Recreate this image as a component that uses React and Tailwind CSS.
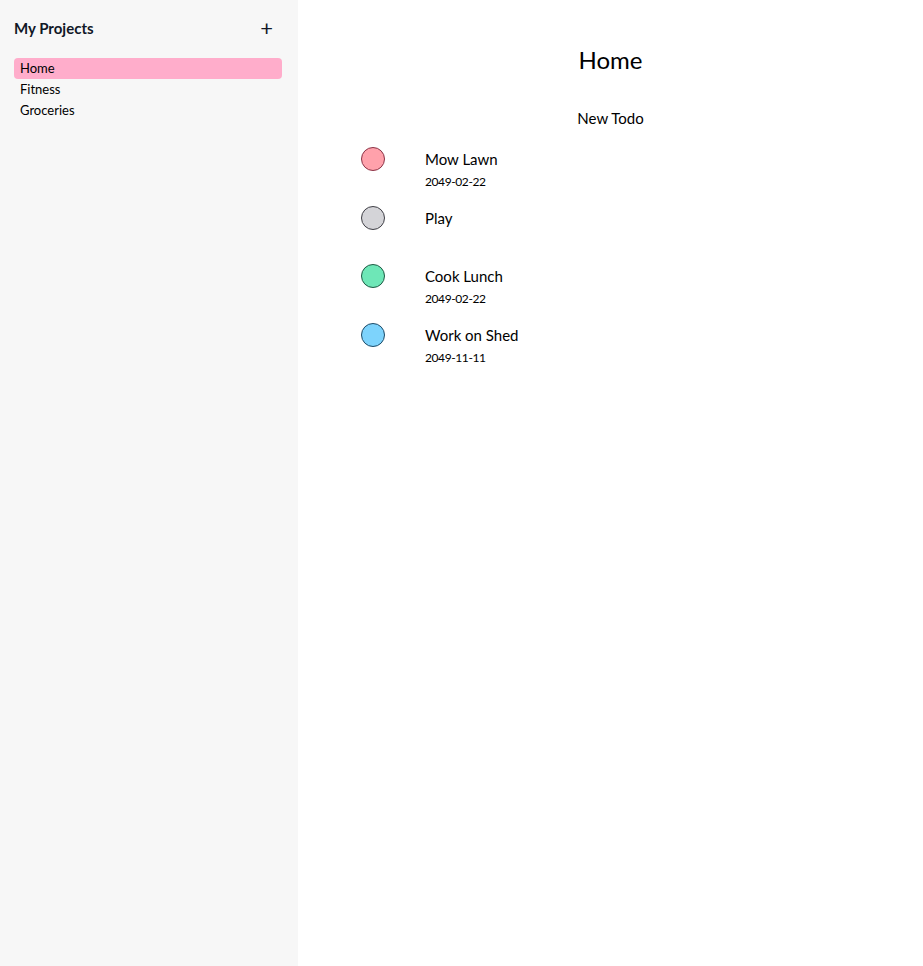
import React from 'react';

const projects = ['Home', 'Fitness', 'Groceries'];

const todos = [
  { title: 'Mow Lawn', date: '2049-02-22', color: 'bg-[#ffa1ab]', border: 'border-[#8a3346]' },
  { title: 'Play', date: '', color: 'bg-[#d4d4d8]', border: 'border-[#3f3f46]' },
  { title: 'Cook Lunch', date: '2049-02-22', color: 'bg-[#6ee7b7]', border: 'border-[#1f5a44]' },
  { title: 'Work on Shed', date: '2049-11-11', color: 'bg-[#7dd3fc]', border: 'border-[#1e4a66]' },
];

const App = () => {
  return (
    <div className="flex min-h-[966px] text-black" style={{ fontFamily: 'Lato, "Noto Sans", sans-serif' }}>
      <aside className="w-[298px] shrink-0 bg-[#f7f7f7] px-[14px] pt-[17px]">
        <div className="flex items-center justify-between pr-[11px]">
          <h2 className="text-[15px] font-bold text-[#111827]">My Projects</h2>
          <button className="text-[22px] leading-none text-[#111827]">+</button>
        </div>
        <ul className="mt-[18px]">
          {projects.map((p) => (
            <li
              key={p}
              className={`mr-[2px] h-[21px] rounded-[4px] px-[6px] text-[13px] leading-[21px] ${p === 'Home' ? 'bg-[#ffadcb]' : ''}`}
            >
              {p}
            </li>
          ))}
        </ul>
      </aside>

      <main className="flex-1 bg-white pt-[44px]">
        <h1 className="text-center text-[24px] leading-[32px]">Home</h1>
        <div className="mt-[32px] text-center text-[15px] leading-[20px]">New Todo</div>
        <div className="mt-[19px] pl-[63px]">
          {todos.map((t) => (
            <div key={t.title} className="flex h-[58.5px] items-start">
              <div className={`h-[24px] w-[24px] shrink-0 rounded-full border ${t.color} ${t.border}`} />
              <div className="ml-[40px] pt-[2px]">
                <div className="text-[15px] leading-[20px]">{t.title}</div>
                {t.date && <div className="mt-[5px] text-[12px] leading-[16px] tracking-[-0.4px]">{t.date}</div>}
              </div>
            </div>
          ))}
        </div>
      </main>
    </div>
  );
};

export default App;
